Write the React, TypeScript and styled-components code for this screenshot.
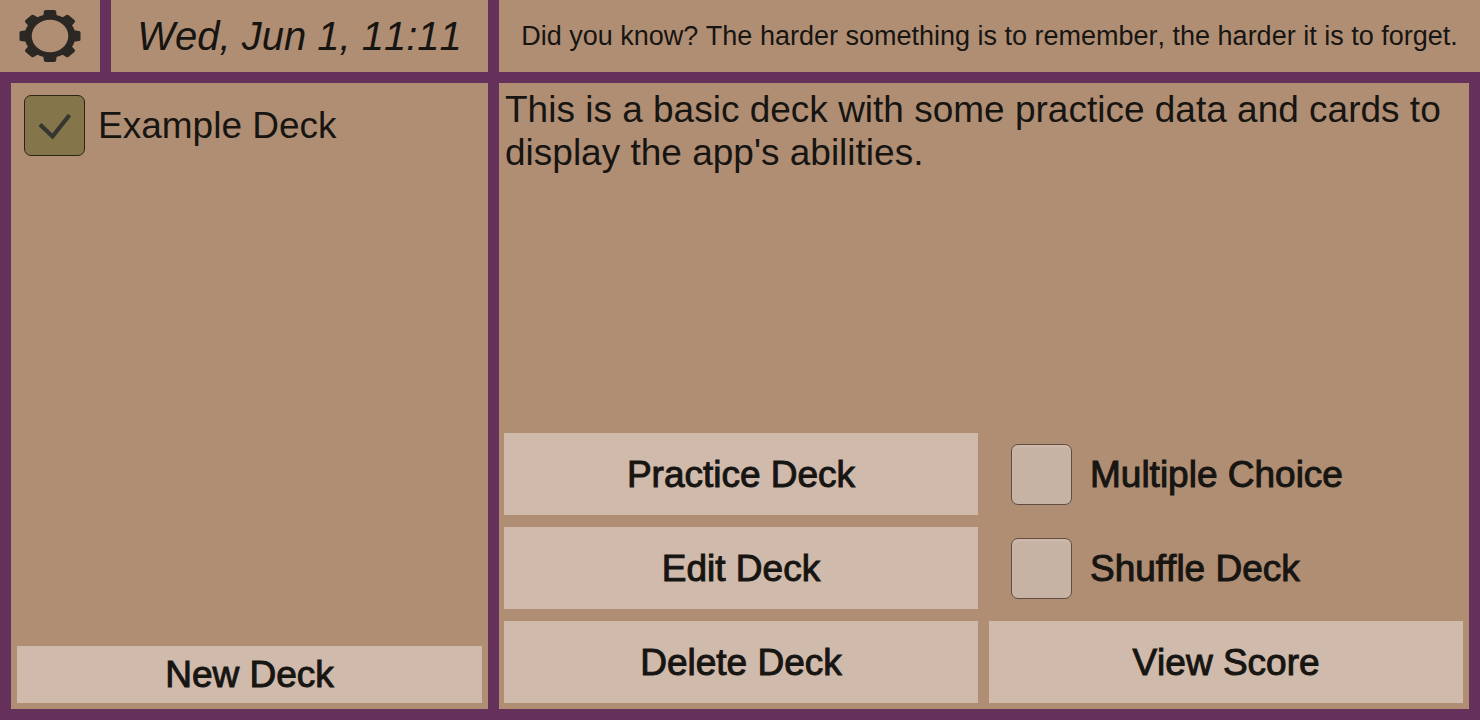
import React from "react";
import styled, { createGlobalStyle } from "styled-components";

const colors = {
  frame: "#65315a",
  panel: "#b08e74",
  button: "#d0baac",
  box: "#c6b3a4",
  boxChecked: "#84764a",
  ink: "#171512",
};

const GlobalStyle = createGlobalStyle`
  *, *::before, *::after { box-sizing: border-box; }
  body {
    margin: 0;
    background: ${colors.frame};
    color: ${colors.ink};
    font-family: "Liberation Sans", Arial, sans-serif;
    font-kerning: none;
  }
  button, input { font: inherit; font-kerning: none; color: inherit; }
`;

const Page = styled.div`
  display: flex;
  flex-direction: column;
  gap: 11px;
  min-height: 100vh;
  background: ${colors.frame};
`;

const Columns = styled.div<{ $grow?: boolean }>`
  display: grid;
  grid-template-columns: minmax(0, 488fr) minmax(0, 981fr);
  gap: 11px;
  flex: ${(p) => (p.$grow ? "1" : "none")};
`;

const HeaderLeft = styled.div`
  display: grid;
  grid-template-columns: 100px 1fr;
  gap: 11px;
`;

const HeaderCell = styled.div`
  display: flex;
  align-items: center;
  justify-content: center;
  min-height: 72px;
  background: ${colors.panel};
  white-space: nowrap;
`;

const SettingsButton = styled.button`
  display: flex;
  align-items: center;
  justify-content: center;
  border: 0;
  padding: 0;
  background: ${colors.panel};
`;

const DateText = styled.time`
  font-size: 40px;
  font-style: italic;
`;

const Tip = styled.p`
  margin: 0;
  font-size: 27px;
`;

const PanelFrame = styled.div<{ $side: "left" | "right" }>`
  display: flex;
  padding: ${(p) => (p.$side === "left" ? "0 0 11px 11px" : "0 11px 11px 0")};
`;

const Panel = styled.section`
  flex: 1;
  display: flex;
  flex-direction: column;
  justify-content: space-between;
  padding: 5px 6px 6px 5px;
  background: ${colors.panel};
`;

const DeckPanel = styled(Panel)`
  padding: 6px;
`;

const DeckList = styled.ul`
  list-style: none;
  margin: 0;
  padding: 6px 7px;
`;

const Description = styled.p`
  margin: 0;
  padding: 0 1px;
  font-size: 37px;
  line-height: 43px;
`;

const Actions = styled.div`
  display: grid;
  grid-template-columns: 1fr 1fr;
  grid-auto-rows: 82px;
  gap: 12px 11px;
`;

const Button = styled.button<{ $compact?: boolean }>`
  min-height: ${(p) => (p.$compact ? "57px" : "82px")};
  border: 0;
  padding: 0;
  background: ${colors.button};
  font-size: 37px;
  line-height: 43px;
  -webkit-text-stroke: 1px ${colors.ink};
`;

const Option = styled.label<{ $strong?: boolean }>`
  display: flex;
  align-items: center;
  gap: ${(p) => (p.$strong ? "18px" : "13px")};
  padding-left: ${(p) => (p.$strong ? "22px" : "0")};
  font-size: 37px;
  line-height: 43px;
  -webkit-text-stroke: ${(p) => (p.$strong ? "1px" : "0")} ${colors.ink};
`;

const BoxWrap = styled.span`
  display: grid;
  place-items: center;
  & > * { grid-area: 1 / 1; }
`;

const Box = styled.input`
  appearance: none;
  width: 61px;
  height: 61px;
  margin: 0;
  border: 1px solid #5f4c42;
  border-radius: 7px;
  background: ${colors.box};
  box-shadow: inset 0 2px 2px #d0baac;
  & + svg { visibility: hidden; }
  &:checked {
    border-color: #2c2417;
    background: ${colors.boxChecked};
    box-shadow: none;
  }
  &:checked + svg { visibility: visible; }
`;

const CheckMark = styled.svg`
  pointer-events: none;
`;

function Gear() {
  return (
    <svg width="64" height="54" viewBox="-32 -27 64 54" aria-hidden="true">
      <g fill="#2b2723">
        <path
          fillRule="evenodd"
          d="M-25.5 0a25.5 21.7 0 1 0 51 0a25.5 21.7 0 1 0-51 0ZM-18.3 0a18.3 16.3 0 1 0 36.6 0a18.3 16.3 0 1 0-36.6 0Z"
        />
        <g transform="scale(1 .85)">
          {[0, 45, 90, 135, 180, 225, 270, 315].map((a) => (
            <path
              key={a}
              transform={`rotate(${a})`}
              d="M-7 -22L-6 -29Q-5.700 -30.500 -4 -30.500H4Q5.700 -30.500 6 -29L7 -22Z"
            />
          ))}
        </g>
      </g>
    </svg>
  );
}

function CheckOption(props: { label: string; checked?: boolean; strong?: boolean }) {
  return (
    <Option $strong={props.strong}>
      <BoxWrap>
        <Box type="checkbox" defaultChecked={props.checked} />
        <CheckMark width="33" height="28" viewBox="0 0 33 28" aria-hidden="true">
          <path d="M2 12.500L14.500 24.500L31.500 3" fill="none" stroke="#363631" strokeWidth="4.200" />
        </CheckMark>
      </BoxWrap>
      <span>{props.label}</span>
    </Option>
  );
}

export default function App() {
  return (
    <Page>
      <GlobalStyle />
      <Columns as="header">
        <HeaderLeft>
          <SettingsButton aria-label="Settings">
            <Gear />
          </SettingsButton>
          <HeaderCell>
            <DateText>Wed, Jun 1, 11:11</DateText>
          </HeaderCell>
        </HeaderLeft>
        <HeaderCell>
          <Tip>Did you know? The harder something is to remember, the harder it is to forget.</Tip>
        </HeaderCell>
      </Columns>
      <Columns as="main" $grow>
        <PanelFrame $side="left">
          <DeckPanel>
            <DeckList>
              <li>
                <CheckOption label="Example Deck" checked />
              </li>
            </DeckList>
            <Button $compact>New Deck</Button>
          </DeckPanel>
        </PanelFrame>
        <PanelFrame $side="right">
          <Panel>
            <Description>
              This is a basic deck with some practice data and cards to display the app's abilities.
            </Description>
            <Actions>
              <Button>Practice Deck</Button>
              <CheckOption label="Multiple Choice" strong />
              <Button>Edit Deck</Button>
              <CheckOption label="Shuffle Deck" strong />
              <Button>Delete Deck</Button>
              <Button>View Score</Button>
            </Actions>
          </Panel>
        </PanelFrame>
      </Columns>
    </Page>
  );
}
